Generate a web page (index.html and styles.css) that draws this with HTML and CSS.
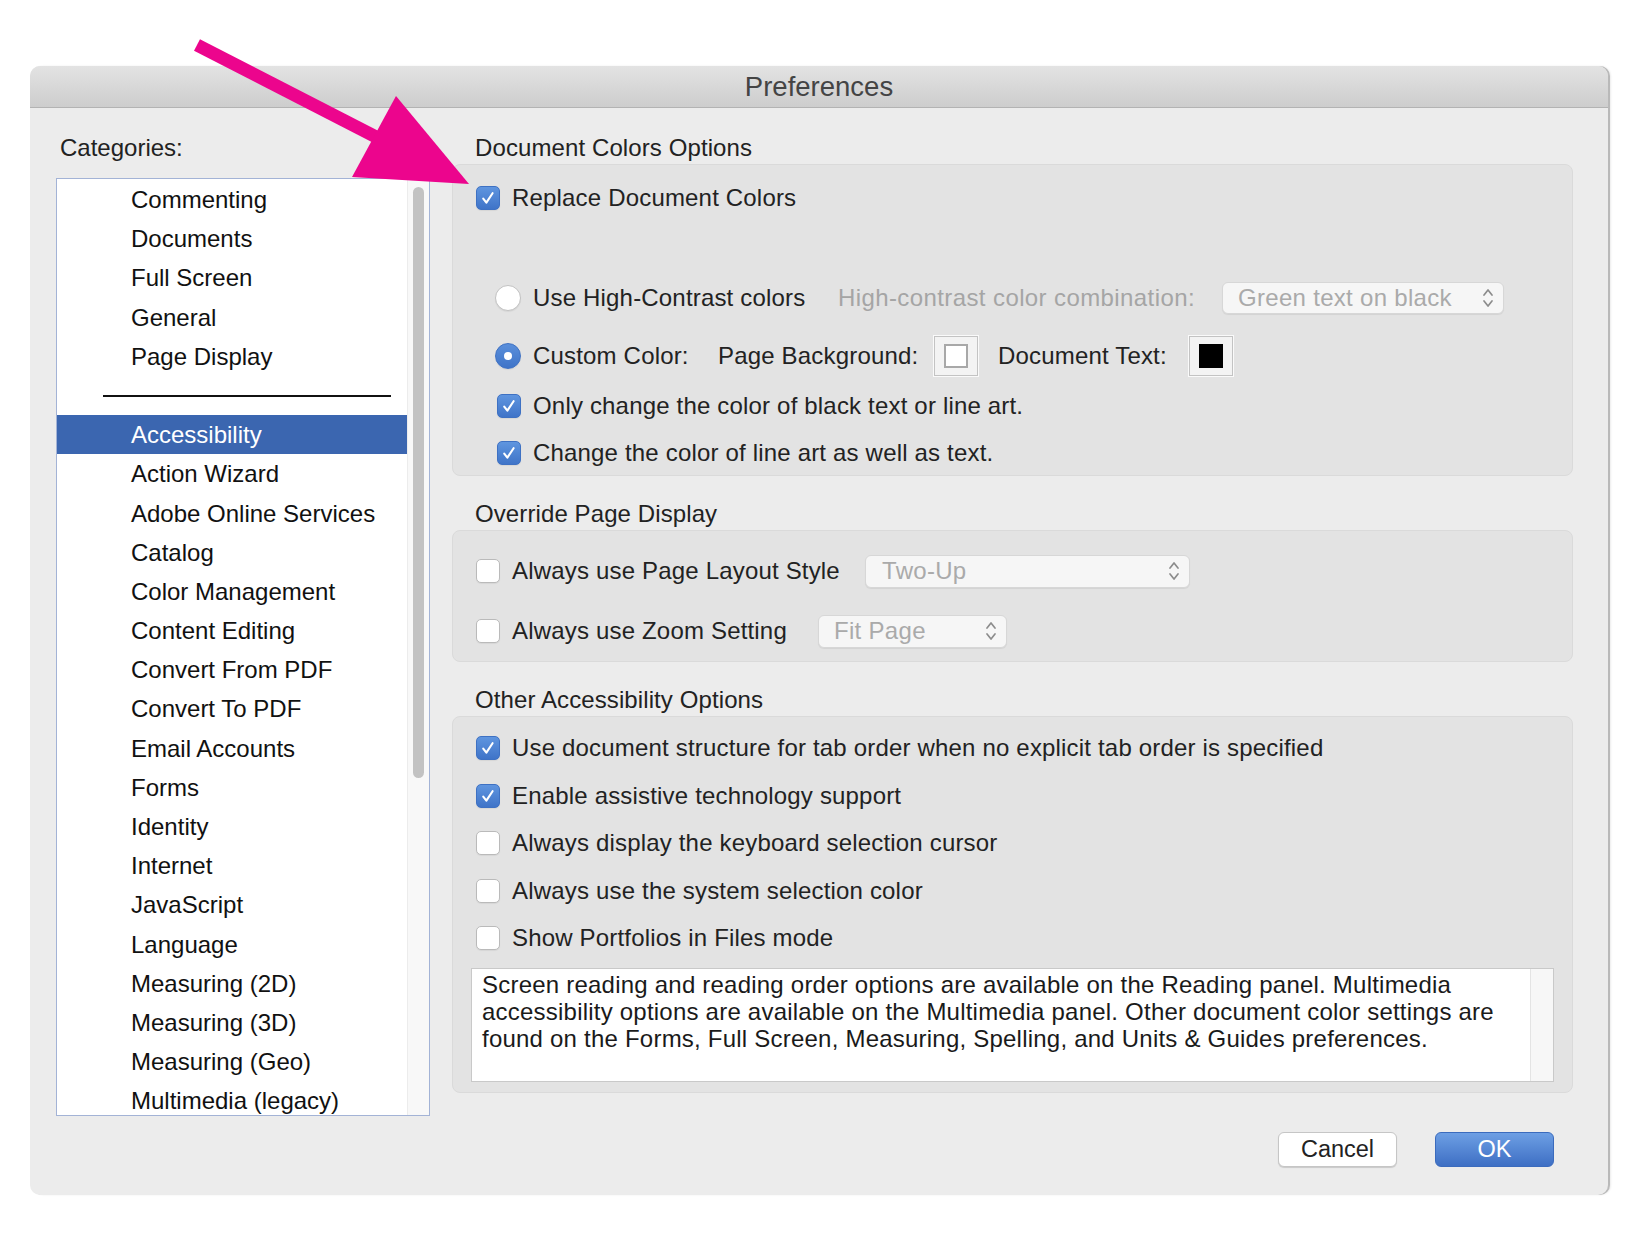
FILE: index.html
```html
<!DOCTYPE html>
<html>
<head>
<meta charset="utf-8">
<title>Preferences</title>
<link rel="stylesheet" href="styles.css">
</head>
<body>
<div class="dialog">
  <div class="titlebar">Preferences</div>
  <div class="content">
    <div class="left">
      <div class="label">Categories:</div>
      <div class="listbox">
        <ul class="list">
          <li>Commenting</li>
          <li>Documents</li>
          <li>Full Screen</li>
          <li>General</li>
          <li>Page Display</li>
          <li class="sep"><span class="sep-line"></span></li>
          <li class="sel">Accessibility</li>
          <li>Action Wizard</li>
          <li>Adobe Online Services</li>
          <li>Catalog</li>
          <li>Color Management</li>
          <li>Content Editing</li>
          <li>Convert From PDF</li>
          <li>Convert To PDF</li>
          <li>Email Accounts</li>
          <li>Forms</li>
          <li>Identity</li>
          <li>Internet</li>
          <li>JavaScript</li>
          <li>Language</li>
          <li>Measuring (2D)</li>
          <li>Measuring (3D)</li>
          <li>Measuring (Geo)</li>
          <li>Multimedia (legacy)</li>
        </ul>
        <div class="vscroll"><div class="thumb"></div></div>
      </div>
    </div>

    <div class="right">
      <div class="section-title">Document Colors Options</div>
      <div class="group g1">
        <div class="row ind1">
          <span class="cb on"><svg viewBox="0 0 24 24"><path d="M6.8 12.6 L10.2 17 L17 6.8"/></svg></span>
          <span class="txt">Replace Document Colors</span>
        </div>
        <div class="row ind2 r-hc">
          <span class="rb"></span>
          <span class="txt w-hc">Use High-Contrast colors</span>
          <span class="txt dim w-combo">High-contrast color combination:</span>
          <div class="selbox w-green"><span>Green text on black</span><svg class="chev" viewBox="0 0 12 24"><path d="M2 9 L6 4 L10 9 M2 15 L6 20 L10 15"/></svg></div>
        </div>
        <div class="row ind2 r-cc">
          <span class="rb on"></span>
          <span class="txt w-cc">Custom Color:</span>
          <span class="txt w-pb">Page Background:</span>
          <span class="swatch"><span class="chip white"></span></span>
          <span class="txt w-dt">Document Text:</span>
          <span class="swatch"><span class="chip black"></span></span>
        </div>
        <div class="row ind3 r-only">
          <span class="cb on"><svg viewBox="0 0 24 24"><path d="M6.8 12.6 L10.2 17 L17 6.8"/></svg></span>
          <span class="txt">Only change the color of black text or line art.</span>
        </div>
        <div class="row ind3 r-change">
          <span class="cb on"><svg viewBox="0 0 24 24"><path d="M6.8 12.6 L10.2 17 L17 6.8"/></svg></span>
          <span class="txt">Change the color of line art as well as text.</span>
        </div>
      </div>

      <div class="section-title st-next">Override Page Display</div>
      <div class="group g2">
        <div class="row ind1">
          <span class="cb"></span>
          <span class="txt w-layout">Always use Page Layout Style</span>
          <div class="selbox w-twoup"><span>Two-Up</span><svg class="chev" viewBox="0 0 12 24"><path d="M2 9 L6 4 L10 9 M2 15 L6 20 L10 15"/></svg></div>
        </div>
        <div class="row ind1 r-zoom">
          <span class="cb"></span>
          <span class="txt w-zoom">Always use Zoom Setting</span>
          <div class="selbox w-fit"><span>Fit Page</span><svg class="chev" viewBox="0 0 12 24"><path d="M2 9 L6 4 L10 9 M2 15 L6 20 L10 15"/></svg></div>
        </div>
      </div>

      <div class="section-title st-next">Other Accessibility Options</div>
      <div class="group g3">
        <div class="row ind1">
          <span class="cb on"><svg viewBox="0 0 24 24"><path d="M6.8 12.6 L10.2 17 L17 6.8"/></svg></span>
          <span class="txt">Use document structure for tab order when no explicit tab order is specified</span>
        </div>
        <div class="row ind1 r-g3">
          <span class="cb on"><svg viewBox="0 0 24 24"><path d="M6.8 12.6 L10.2 17 L17 6.8"/></svg></span>
          <span class="txt">Enable assistive technology support</span>
        </div>
        <div class="row ind1 r-g3">
          <span class="cb"></span>
          <span class="txt">Always display the keyboard selection cursor</span>
        </div>
        <div class="row ind1 r-g3">
          <span class="cb"></span>
          <span class="txt">Always use the system selection color</span>
        </div>
        <div class="row ind1 r-g3">
          <span class="cb"></span>
          <span class="txt">Show Portfolios in Files mode</span>
        </div>
        <div class="notebox">
          <div class="note">Screen reading and reading order options are available on the Reading panel. Multimedia<br>accessibility options are available on the Multimedia panel. Other document color settings are<br>found on the Forms, Full Screen, Measuring, Spelling, and Units &amp; Guides preferences.</div>
          <div class="note-scroll"></div>
        </div>
      </div>

      <div class="buttons">
        <div class="btn cancel">Cancel</div>
        <div class="btn ok">OK</div>
      </div>
    </div>
  </div>
</div>

<svg class="arrow" viewBox="0 0 1648 1242" width="1648" height="1242">
  <line x1="197" y1="45" x2="382" y2="140" stroke="#ec058d" stroke-width="13"/>
  <polygon points="469,184 396,96 352,177" fill="#ec058d"/>
</svg>
</body>
</html>
```

FILE: styles.css
```css
html, body {
  margin: 0;
  padding: 0;
}

body {
  position: relative;
  width: 1648px;
  height: 1242px;
  overflow: hidden;
  background: #ffffff;
  font-family: "Liberation Sans", Arial, sans-serif;
  font-size: 24px;
  color: #222222;
}

.dialog {
  margin: 66px 0 0 30px;
  width: 1578px;
  height: 1129px;
  background: #ececec;
  border-radius: 10px;
  overflow: hidden;
  box-shadow: 2px 0 0 #b9b9b9, 3px 0 2px rgba(0, 0, 0, 0.08);
  display: flex;
  flex-direction: column;
}

.titlebar {
  height: 41px;
  line-height: 42px;
  text-align: center;
  font-size: 27.5px;
  color: #444444;
  background: linear-gradient(#e3e3e3, #cdcdcd);
  border-bottom: 1px solid #b3b3b3;
  flex: none;
}

.content {
  display: flex;
  flex: 1;
}

/* ---------- left column ---------- */
.left {
  width: 422px;
  box-sizing: border-box;
  padding: 26px 0 0 26px;
  flex: none;
}

.label {
  height: 28px;
  line-height: 28px;
  padding-left: 4px;
  color: #222222;
}

.listbox {
  margin-top: 16px;
  width: 374px;
  height: 938px;
  box-sizing: border-box;
  border: 1px solid #a3b3d6;
  background: #ffffff;
  display: flex;
  overflow: hidden;
}

.list {
  list-style: none;
  margin: 0;
  padding: 1px 0 0 0;
  flex: 1;
  overflow: hidden;
}

.list li {
  height: 39.2px;
  line-height: 39.2px;
  padding-left: 74px;
  color: #111111;
  white-space: nowrap;
}

.list li.sel {
  background: #3b66b0;
  color: #ffffff;
}

.list li.sep {
  padding-left: 46px;
  display: flex;
  align-items: center;
}

.sep-line {
  display: block;
  width: 288px;
  height: 2px;
  background: #111111;
}

.vscroll {
  width: 22px;
  flex: none;
  background: #f8f8f8;
  border-left: 1px solid #ececec;
  box-sizing: border-box;
}

.thumb {
  margin: 8px auto 0;
  width: 11px;
  height: 591px;
  border-radius: 6px;
  background: #c2c2c2;
}

/* ---------- right column ---------- */
.right {
  flex: 1;
  padding: 26px 35px 0 0;
  display: flex;
  flex-direction: column;
}

.section-title {
  height: 28px;
  line-height: 28px;
  padding-left: 23px;
  margin-bottom: 2px;
  color: #222222;
  letter-spacing: 0.1px;
}

.st-next {
  margin-top: 24px;
}

.group {
  background: #e3e3e3;
  border: 1px solid #dadada;
  border-radius: 8px;
  box-sizing: border-box;
}

.g1 {
  height: 312px;
  padding-top: 13px;
}

.g2 {
  height: 132px;
  padding-top: 20px;
}

.g3 {
  height: 377px;
  padding-top: 11px;
}

.row {
  height: 40px;
  display: flex;
  align-items: center;
  white-space: nowrap;
}

.ind1 { padding-left: 23px; }
.ind2 { padding-left: 42px; }
.ind3 { padding-left: 44px; }

.r-hc { margin-top: 60px; }
.r-cc { margin-top: 17.5px; }
.r-only { margin-top: 10px; }
.r-change { margin-top: 7px; }
.r-zoom { margin-top: 20px; }
.r-g3 { margin-top: 7.6px; }

.txt {
  margin-left: 12px;
  color: #222222;
  letter-spacing: 0.18px;
}

.txt.dim {
  color: #a5a5a5;
  margin-left: 0;
  letter-spacing: 0.4px;
}

.w-hc { width: 305px; }
.w-combo { width: 384px; }
.w-cc { width: 185px; }
.w-pb { width: 216px; margin-left: 0; }
.w-dt { width: 191px; margin-left: 20px; }
.w-layout { width: 353px; }
.w-zoom { width: 306px; }

/* checkbox */
.cb {
  width: 24px;
  height: 24px;
  flex: none;
  box-sizing: border-box;
  border-radius: 5px;
  background: #ffffff;
  border: 1px solid #bababa;
  box-shadow: 0 1px 1px rgba(0, 0, 0, 0.06);
  display: flex;
}

.cb.on {
  background: linear-gradient(#5f95df, #3f74c8);
  border-color: #3e71c3;
}

.cb svg {
  width: 22px;
  height: 22px;
}

.cb svg path {
  fill: none;
  stroke: #ffffff;
  stroke-width: 2.3;
  stroke-linecap: round;
  stroke-linejoin: round;
}

/* radio */
.rb {
  width: 26px;
  height: 26px;
  flex: none;
  box-sizing: border-box;
  border-radius: 50%;
  background: #ffffff;
  border: 1px solid #c2c2c2;
  box-shadow: 0 1px 1px rgba(0, 0, 0, 0.06);
  display: flex;
  align-items: center;
  justify-content: center;
}

.rb.on {
  background: linear-gradient(#5a8fdb, #3f74c8);
  border-color: #3e71c3;
}

.rb.on::after {
  content: "";
  width: 8px;
  height: 8px;
  border-radius: 50%;
  background: #ffffff;
}

/* select */
.selbox {
  box-sizing: border-box;
  height: 33px;
  display: flex;
  align-items: center;
  justify-content: space-between;
  padding: 0 9px 0 15px;
  background: #f6f6f6;
  border: 1px solid #d7d7d7;
  border-radius: 6px;
  box-shadow: 0 1px 1px rgba(0, 0, 0, 0.07);
  color: #aaaaaa;
  letter-spacing: 0.3px;
  flex: none;
}

.w-green { width: 282px; height: 32px; }
.w-twoup { width: 325px; padding-left: 16px; }
.w-fit { width: 189px; }

.chev {
  width: 12px;
  height: 24px;
}

.chev path {
  fill: none;
  stroke: #8c8c8c;
  stroke-width: 1.7;
  stroke-linecap: round;
  stroke-linejoin: round;
}

/* color swatch */
.swatch {
  width: 44px;
  height: 40px;
  flex: none;
  box-sizing: border-box;
  background: #f3f3f3;
  border: 1px solid #c3c3c3;
  box-shadow: 0 0 0 1px #fafafa;
  display: flex;
  align-items: center;
  justify-content: center;
}

.chip {
  width: 24px;
  height: 24px;
  box-sizing: border-box;
}

.chip.white {
  background: #ffffff;
  border: 2px solid #a8a8a8;
}

.chip.black {
  background: #000000;
}

/* note box */
.notebox {
  margin: 9.6px 18px 0 18px;
  height: 114.5px;
  box-sizing: border-box;
  border: 1px solid #c9c9c9;
  background: #ffffff;
  display: flex;
}

.note {
  flex: 1;
  padding: 3px 0 0 10px;
  line-height: 26.8px;
  color: #1a1a1a;
  white-space: nowrap;
  letter-spacing: 0.22px;
}

.note-scroll {
  width: 22px;
  flex: none;
  background: #f7f7f7;
  border-left: 1px solid #e4e4e4;
}

/* buttons */
.buttons {
  margin-top: 39px;
  padding-right: 19px;
  display: flex;
  justify-content: flex-end;
  gap: 38px;
}

.btn {
  width: 119px;
  height: 35px;
  box-sizing: border-box;
  border-radius: 6px;
  display: flex;
  align-items: center;
  justify-content: center;
  font-size: 23.5px;
}

.btn.cancel {
  background: #ffffff;
  border: 1px solid #c6c6c6;
  box-shadow: 0 1px 1px rgba(0, 0, 0, 0.15);
  color: #222222;
}

.btn.ok {
  background: linear-gradient(#6d9fe4, #3e6fc4);
  border: 1px solid #3b6bbd;
  color: #ffffff;
}

/* annotation arrow overlay */
.arrow {
  position: absolute;
  left: 0;
  top: 0;
  pointer-events: none;
}
```
